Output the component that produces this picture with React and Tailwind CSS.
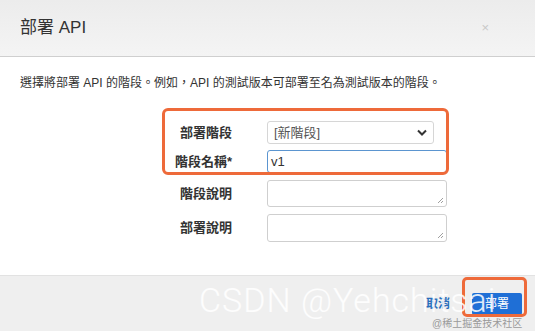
import React from 'react';

const font = { fontFamily: '"Liberation Sans", "Noto Sans CJK TC", sans-serif' };

const Row = ({ label, children, className = '' }) => (
  <div className={`flex items-center ${className}`}>
    <div className="w-[232px] text-right text-[13px] font-bold text-[#333]">{label}</div>
    <div className="ml-[35px]">{children}</div>
  </div>
);

const TextArea = ({ h }) => (
  <div className={`relative w-[180px] ${h} rounded-[3px] border border-[#cfcfcf] bg-white`}>
    <svg className="absolute bottom-[2px] right-[2px]" width="7" height="7" viewBox="0 0 7 7">
      <path d="M6 1L1 6M6 4L4 6" stroke="#888" strokeWidth="0.8" />
    </svg>
  </div>
);

export default function App() {
  return (
    <div className="relative h-[331px] w-[535px] overflow-hidden bg-white" style={font}>
      {/* header */}
      <div className="flex h-[57px] items-center justify-between border-b border-[#cfcfcf] bg-gradient-to-b from-[#ececec] to-[#f4f4f4] pl-[20px] pr-[46px]">
        <h1 className="text-[17px] text-[#333]">部署 API</h1>
        <span className="text-[13px] text-[#c8c8c8]">×</span>
      </div>

      {/* body */}
      <div className="h-[218px] pt-[17px]">
        <p className="pl-[20px] text-[12px] text-[#333]">
          選擇將部署 API 的階段。例如，API 的測試版本可部署至名為測試版本的階段。
        </p>
        <div className="mt-[29px] flex flex-col">
          <Row label="部署階段">
            <div className="flex h-[23px] w-[167px] items-center justify-between rounded-[3px] border border-[#d6d6d6] bg-white px-[6px] text-[13px] text-[#555]">
              <span>[新階段]</span>
              <svg width="10" height="7" viewBox="0 0 10 7">
                <path d="M1 1.5L5 5.5L9 1.5" stroke="#333" strokeWidth="2" fill="none" />
              </svg>
            </div>
          </Row>
          <Row label="階段名稱*" className="mt-[6px]">
            <div className="flex h-[23px] w-[180px] items-center rounded-[3px] border border-[#5b95d0] bg-white px-[3px] text-[13px] text-[#333]">
              v1
            </div>
          </Row>
          <Row label="階段說明" className="mt-[7px]">
            <TextArea h="h-[27px]" />
          </Row>
          <Row label="部署說明" className="mt-[7px]">
            <TextArea h="h-[28px]" />
          </Row>
        </div>
      </div>

      {/* footer */}
      <div className="flex h-[56px] items-center justify-end gap-[22px] border-t border-[#e2e2e2] bg-[#efefef] pr-[13px]">
        <span className="text-[12px] font-bold text-[#2a6ebb]">取消</span>
        <button className="h-[22px] w-[50px] rounded-[2px] bg-[#1f6fd6] text-[12px] text-white">部署</button>
      </div>

      {/* annotations */}
      <div className="pointer-events-none absolute left-[162px] top-[108px] h-[67px] w-[287px] rounded-[6px] border-[3px] border-[#ee6a3a]" />
      <div className="pointer-events-none absolute left-[462px] top-[277px] h-[40px] w-[65px] rounded-[5px] border-[3px] border-[#ee6a3a]" />

      {/* watermarks */}
      <div
        className="pointer-events-none absolute left-[199px] top-[280px] whitespace-nowrap text-[34px] font-light leading-[40px] tracking-[1px] text-white/85"
        style={{ fontFamily: 'Roboto, sans-serif' }}
      >
        CSDN @Yehchitsai
      </div>
      <div className="pointer-events-none absolute left-[432px] top-[316px] whitespace-nowrap text-[10px] text-[#9a9a9a]">
        @稀土掘金技术社区
      </div>
    </div>
  );
}
